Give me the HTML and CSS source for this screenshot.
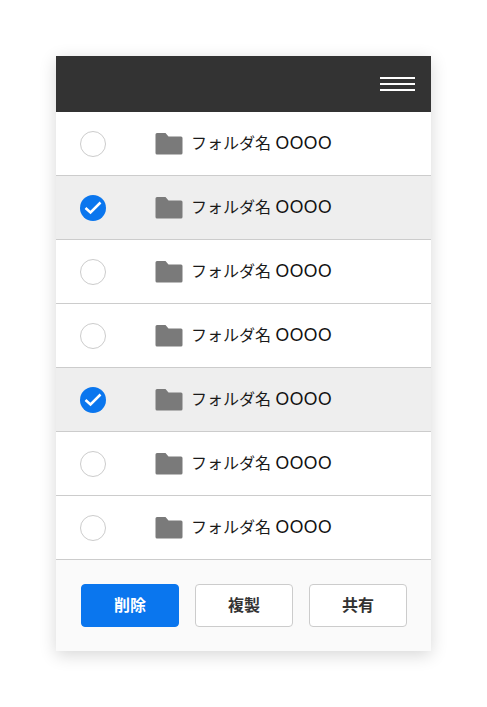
FILE: index.html
```html
<!DOCTYPE html>
<html lang="ja">
<head>
<meta charset="utf-8">
<title>フォルダ一覧</title>
<link rel="stylesheet" href="styles.css">
</head>
<body>
<main class="card">
  <header class="bar">
    <button class="menu" aria-label="メニュー"><span></span><span></span><span></span></button>
  </header>
  <ul class="list">
    <li class="row"><span class="check"></span><svg class="folder" viewBox="0 0 28 24"><path d="M2 1h8.500l3 3.500H26a1.500 1.500 0 0 1 1.500 1.500v15A1.500 1.500 0 0 1 26 22.500H2A1.500 1.500 0 0 1 .5 21V2.500A1.500 1.500 0 0 1 2 1z"/></svg><span class="name">フォルダ名 <span class="mark">OOOO</span></span></li>
    <li class="row selected"><span class="check on"><svg viewBox="0 0 26 26"><path d="M5.500 13l5 4.500L20.500 7.500"/></svg></span><svg class="folder" viewBox="0 0 28 24"><path d="M2 1h8.500l3 3.500H26a1.500 1.500 0 0 1 1.500 1.500v15A1.500 1.500 0 0 1 26 22.500H2A1.500 1.500 0 0 1 .5 21V2.500A1.500 1.500 0 0 1 2 1z"/></svg><span class="name">フォルダ名 <span class="mark">OOOO</span></span></li>
    <li class="row"><span class="check"></span><svg class="folder" viewBox="0 0 28 24"><path d="M2 1h8.500l3 3.500H26a1.500 1.500 0 0 1 1.500 1.500v15A1.500 1.500 0 0 1 26 22.500H2A1.500 1.500 0 0 1 .5 21V2.500A1.500 1.500 0 0 1 2 1z"/></svg><span class="name">フォルダ名 <span class="mark">OOOO</span></span></li>
    <li class="row"><span class="check"></span><svg class="folder" viewBox="0 0 28 24"><path d="M2 1h8.500l3 3.500H26a1.500 1.500 0 0 1 1.500 1.500v15A1.500 1.500 0 0 1 26 22.500H2A1.500 1.500 0 0 1 .5 21V2.500A1.500 1.500 0 0 1 2 1z"/></svg><span class="name">フォルダ名 <span class="mark">OOOO</span></span></li>
    <li class="row selected"><span class="check on"><svg viewBox="0 0 26 26"><path d="M5.500 13l5 4.500L20.500 7.500"/></svg></span><svg class="folder" viewBox="0 0 28 24"><path d="M2 1h8.500l3 3.500H26a1.500 1.500 0 0 1 1.500 1.500v15A1.500 1.500 0 0 1 26 22.500H2A1.500 1.500 0 0 1 .5 21V2.500A1.500 1.500 0 0 1 2 1z"/></svg><span class="name">フォルダ名 <span class="mark">OOOO</span></span></li>
    <li class="row"><span class="check"></span><svg class="folder" viewBox="0 0 28 24"><path d="M2 1h8.500l3 3.500H26a1.500 1.500 0 0 1 1.500 1.500v15A1.500 1.500 0 0 1 26 22.500H2A1.500 1.500 0 0 1 .5 21V2.500A1.500 1.500 0 0 1 2 1z"/></svg><span class="name">フォルダ名 <span class="mark">OOOO</span></span></li>
    <li class="row"><span class="check"></span><svg class="folder" viewBox="0 0 28 24"><path d="M2 1h8.500l3 3.500H26a1.500 1.500 0 0 1 1.500 1.500v15A1.500 1.500 0 0 1 26 22.500H2A1.500 1.500 0 0 1 .5 21V2.500A1.500 1.500 0 0 1 2 1z"/></svg><span class="name">フォルダ名 <span class="mark">OOOO</span></span></li>
  </ul>
  <footer class="actions">
    <button class="btn primary">削除</button>
    <button class="btn">複製</button>
    <button class="btn">共有</button>
  </footer>
</main>
</body>
</html>
```
FILE: styles.css
```css
* { box-sizing: border-box; }
html, body { margin: 0; background: #fff; }
body {
  padding: 56px 56px;
  font-family: "Noto Sans CJK JP", "Noto Sans", sans-serif;
}
.card {
  width: 375px;
  background: #fff;
  box-shadow: 0 4px 16px rgba(0, 0, 0, 0.16);
}
.bar {
  height: 56px;
  background: #333;
  display: flex;
  align-items: center;
  justify-content: flex-end;
  padding-right: 16px;
}
.menu {
  width: 35px;
  padding: 0;
  border: 0;
  background: none;
  display: flex;
  flex-direction: column;
  gap: 4px;
}
.menu span { display: block; height: 2px; background: #fff; }
.list { list-style: none; margin: 0; padding: 0; }
.row {
  height: 64px;
  border-bottom: 1px solid #ccc;
  display: flex;
  align-items: center;
  padding-left: 24px;
}
.row.selected { background: #eee; }
.check {
  width: 26px;
  height: 26px;
  border: 1px solid #ccc;
  border-radius: 50%;
  background: #fff;
  margin-right: 49px;
  flex: none;
}
.check.on { background: #0a76ee; border: 0; }
.check svg { display: block; width: 26px; height: 26px; fill: none; stroke: #fff; stroke-width: 2.500; }
.folder { width: 28px; height: 24px; fill: #7a7a7a; flex: none; margin-right: 8px; }
.name { font-size: 16px; line-height: 24px; color: #1a1a1a; padding-bottom: 2px; }
.mark { font-family: "Lato", sans-serif; font-size: 17px; letter-spacing: 0.500px; margin-left: 1px; color: #111; }
.actions {
  height: 91px;
  background: #fafafa;
  display: flex;
  gap: 16px;
  padding: 24px;
  padding-left: 25px;
  align-items: flex-start;
}
.btn {
  flex: none;
  width: 98px;
  height: 43px;
  border: 1px solid #ccc;
  border-radius: 4px;
  background: #fff;
  color: #333;
  font: 700 16px "Noto Sans CJK JP", sans-serif;
  padding: 0 0 3px;
}
.btn.primary { background: #0a76ee; border-color: #0a76ee; color: #fff; }
```
